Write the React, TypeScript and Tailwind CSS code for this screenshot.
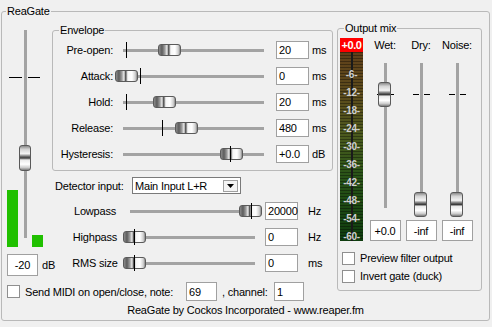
import React from "react";

const hGrad =
  "bg-[image:linear-gradient(to_right,#8a8a8a_0%,#5c5c5c_14%,#9e9e9e_28%,#ececec_38%,#4a4a4a_46%,#f6f6f6_56%,#ffffff_76%,#cfcfcf_92%,#8a8a8a_100%)]";
const vGrad =
  "bg-[image:linear-gradient(to_bottom,#8a8a8a_0%,#d4d4d4_14%,#f4f4f4_32%,#6a6a6a_44%,#3c3c3c_50%,#eaeaea_58%,#ffffff_76%,#cccccc_90%,#7c7c7c_100%)]";

function Edit({ value, className, center }: { value: string; className: string; center?: boolean }) {
  return (
    <div
      className={
        "bg-white border border-[#a0a0a0] flex items-center px-[2px] shrink-0 " +
        (center ? "justify-center " : "") +
        className
      }
    >
      {value}
    </div>
  );
}

function Check() {
  return <div className="w-[13px] h-[13px] shrink-0 bg-white border border-[#8f8f8f]" />;
}

function HSlider({ className, thumb, tick }: { className: string; thumb: number; tick: number }) {
  return (
    <div className={"relative h-[18px] flex items-center shrink-0 " + className}>
      <div className="h-[3px] flex-1 bg-[#a3a3a3]" />
      <div
        className={"absolute top-[3px] w-[23px] h-[12px] rounded-[3px] border border-[#5a5a5a] " + hGrad}
        style={{ left: thumb }}
      />
      <div className="absolute top-[1px] h-[16px] w-px bg-black" style={{ left: tick }} />
    </div>
  );
}

function VSlider({ thumb }: { thumb: number }) {
  return (
    <div className="relative mt-[7px] h-[158px] w-[36px] flex justify-center pt-[4px] pb-[9px]">
      <div className="w-[3px] h-full bg-[#a3a3a3]" />
      <div className="absolute top-[35px] left-[10px] w-[6px] h-px bg-black" />
      <div className="absolute top-[35px] left-[21px] w-[6px] h-px bg-black" />
      <div
        className={"absolute left-[11px] w-[13px] h-[25px] rounded-[3px] border border-[#5a5a5a] " + vGrad}
        style={{ top: thumb }}
      />
    </div>
  );
}

const envelope: [string, number, number, string, string][] = [
  ["Pre-open:", 44, 12, "20", "ms"],
  ["Attack:", 1, 26, "0", "ms"],
  ["Hold:", 39, 12, "20", "ms"],
  ["Release:", 61, 48, "480", "ms"],
  ["Hysteresis:", 106, 116, "+0.0", "dB"],
];

const filters: [string, number, number, string, string][] = [
  ["Lowpass", 117, 129, "20000", "Hz"],
  ["Highpass", 1, 12, "0", "Hz"],
  ["RMS size", 1, 12, "0", "ms"],
];

const meterLabels = ["6", "12", "18", "24", "30", "36", "42", "48", "54", "60"];

const mix: [string, number, string][] = [
  ["Wet:", 23, "+0.0"],
  ["Dry:", 133, "-inf"],
  ["Noise:", 133, "-inf"],
];

export default function App() {
  return (
    <div className="w-[492px] h-[327px] bg-[#f0f0f0] pl-[1px] pt-[4px] text-[11px] tracking-[-0.2px] leading-[14px] whitespace-nowrap text-black font-['Liberation_Sans',Arial,sans-serif] overflow-hidden">
      <fieldset className="w-[489px] h-[317px] border border-[#b9b9b9] rounded-[3px]">
        <legend className="ml-[4px] px-[1px]">ReaGate</legend>

        <div className="flex">
          {/* left part */}
          <div className="w-[335px]">
            <div className="flex">
              {/* input gain + meter */}
              <div className="w-[50px]">
                <div className="mt-[12px] h-[217px] pl-[5px] flex items-end">
                  <div className="w-[11px] h-[57px] bg-[#20c000]" />
                  <div className="relative w-[14px] self-stretch pb-[9px] flex justify-center">
                    <div className="w-[3px] h-full bg-[#a3a3a3]" />
                    <div className="absolute top-[47px] left-[-9px] w-[13px] h-px bg-black" />
                    <div className="absolute top-[47px] left-[10px] w-[12px] h-px bg-black" />
                    <div
                      className={"absolute top-[115px] left-[1px] w-[12px] h-[26px] rounded-[3px] border border-[#5a5a5a] " + vGrad}
                    />
                  </div>
                  <div className="w-[11px] h-[12px] bg-[#20c000]" />
                </div>
                <div className="mt-[7px] pl-[5px] flex items-center">
                  <Edit value="-20" className="w-[31px] h-[22px]" center />
                  <span className="ml-[4px]">dB</span>
                </div>
              </div>

              {/* middle */}
              <div className="w-[281px]">
                <fieldset className="mt-[5px] h-[148px] border border-[#b9b9b9] rounded-[3px]">
                  <legend className="ml-[6px] px-[1px]">Envelope</legend>
                  {envelope.map(([label, thumb, tick, value, unit]) => (
                    <div key={label} className="h-[26px] flex items-center">
                      <div className="w-[60px] shrink-0 text-right">{label}</div>
                      <HSlider className="ml-[1px] w-[159px] px-[9px]" thumb={thumb} tick={tick} />
                      <Edit value={value} className="ml-[3px] w-[33px] h-[18px]" />
                      <span className="ml-[3px]">{unit}</span>
                    </div>
                  ))}
                </fieldset>

                <div className="mt-[6px] h-[17px] flex items-center">
                  <div className="w-[80px] shrink-0 pl-[3px]">Detector input:</div>
                  <div className="w-[109px] h-[17px] bg-white border border-[#7a7a7a] flex items-center pl-[2px] pr-[2px]">
                    <span className="flex-1">Main Input L+R</span>
                    <div className="w-[15px] h-[12px] border border-[#a0a0a0] bg-[#f4f4f4] flex items-center justify-center">
                      <svg width="7" height="4" viewBox="0 0 7 4">
                        <path d="M0 0h7L3.5 4z" fill="#000" />
                      </svg>
                    </div>
                  </div>
                </div>

                <div className="mt-[4px]">
                  {filters.map(([label, thumb, tick, value, unit]) => (
                    <div key={label} className="h-[26px] flex items-center">
                      <div className="ml-[16px] w-[54px] shrink-0 text-center">{label}</div>
                      <HSlider className="w-[142px] pl-[8px] pr-[9px]" thumb={thumb} tick={tick} />
                      <Edit value={value} className="ml-[1px] w-[33px] h-[18px]" />
                      <span className="ml-[10px]">{unit}</span>
                    </div>
                  ))}
                </div>
              </div>
            </div>

            {/* send midi */}
            <div className="mt-[6px] h-[19px] pl-[5px] flex items-center">
              <Check />
              <span className="ml-[5px] w-[161px] shrink-0">Send MIDI on open/close, note:</span>
              <Edit value="69" className="w-[31px] h-[19px]" />
              <span className="ml-[5px] w-[52px] shrink-0">, channel:</span>
              <Edit value="1" className="w-[30px] h-[19px]" />
            </div>
          </div>

          {/* output mix */}
          <fieldset className="mt-[3px] w-[145px] h-[270px] border border-[#b9b9b9] rounded-[3px]">
            <legend className="ml-[6px] px-[1px]">Output mix</legend>
            <div className="pt-[3px] pl-[2px] flex">
              <div className="w-[23px] flex flex-col">
                <div className="h-[14px] bg-[#ff0000] text-white text-[11px] font-bold leading-[14px] text-center tracking-[-0.4px]">
                  +0.0
                </div>
                <div className="relative h-[189px] overflow-hidden bg-[image:linear-gradient(to_bottom,#60401a_0%,#5a4c1c_25%,#4a5a1e_45%,#2a5418_65%,#0e3c0e_100%)]">
                  <div className="absolute inset-0 bg-[image:repeating-linear-gradient(to_bottom,rgba(0,0,0,0.35)_0px,rgba(0,0,0,0.35)_1px,transparent_1px,transparent_3px)]" />
                  <div className="absolute top-0 bottom-0 left-[11px] w-[2px] bg-[#1a1a1a]" />
                  <div className="relative flex flex-col gap-[10px] pt-[19px]">
                    {meterLabels.map((l) => (
                      <div key={l} className="h-[8px] leading-[8px] text-center text-[10px] font-bold text-[#cfcfcf] tracking-[-0.3px]">
                        -{l}-
                      </div>
                    ))}
                  </div>
                </div>
              </div>
              <div className="ml-[4px] flex">
                {mix.map(([label, thumb, value]) => (
                  <div key={label} className="w-[36px] flex flex-col items-center">
                    <div className="h-[14px]">{label}</div>
                    <VSlider thumb={thumb} />
                    <Edit value={value} className="mt-[3px] w-[31px] h-[21px]" center />
                  </div>
                ))}
              </div>
            </div>
            <div className="mt-[8px] pl-[4px]">
              <div className="h-[18px] flex items-center">
                <Check />
                <span className="ml-[5px]">Preview filter output</span>
              </div>
              <div className="h-[18px] flex items-center">
                <Check />
                <span className="ml-[5px]">Invert gate (duck)</span>
              </div>
            </div>
          </fieldset>
        </div>

        <div className="mt-[2px] text-center">ReaGate by Cockos Incorporated - www.reaper.fm</div>
      </fieldset>
    </div>
  );
}
